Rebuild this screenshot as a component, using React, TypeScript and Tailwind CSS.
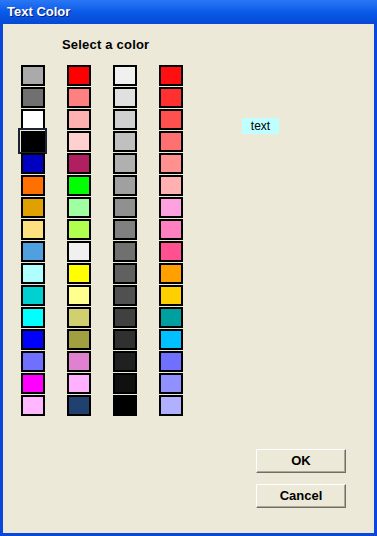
const COLUMNS: string[][] = [
  ["#aaaaaa", "#707070", "#ffffff", "#000000", "#0000c0", "#ff7000", "#e0a000", "#ffe080", "#50a0e0", "#b0ffff", "#00d0d0", "#00ffff", "#0000ff", "#7070ff", "#ff00ff", "#ffb8ff"],
  ["#ff0000", "#ff8080", "#ffb0b0", "#ffd0d0", "#b02060", "#00ff00", "#a0ffa0", "#b0ff50", "#f0f0f0", "#ffff00", "#ffff90", "#d0d070", "#a0a040", "#e080d0", "#ffb0ff", "#204070"],
  ["#f0f0f0", "#e0e0e0", "#d0d0d0", "#c0c0c0", "#b0b0b0", "#a0a0a0", "#909090", "#808080", "#707070", "#606060", "#505050", "#404040", "#303030", "#202020", "#101010", "#000000"],
  ["#ff1010", "#ff3030", "#ff5050", "#ff7070", "#ff9090", "#ffb0b0", "#ffa0e0", "#ff80c0", "#ff5090", "#ffa000", "#ffd000", "#00a0a0", "#00c0ff", "#7070ff", "#9090ff", "#b0b0ff"],
];

const FONT = { fontFamily: '"Liberation Sans", Arial, sans-serif' };

function XpButton({ label }: { label: string }) {
  return (
    <button
      className="w-[90px] h-[24px] bg-[#ece9d8] border border-t-white border-l-white border-r-[#716f64] border-b-[#716f64] shadow-[inset_-1px_-1px_0_#aca899] text-[13px] font-bold text-black flex items-center justify-center"
      style={FONT}
    >
      {label}
    </button>
  );
}

export default function App() {
  return (
    <div className="w-[377px] h-[536px] flex flex-col" style={FONT}>
      {/* title bar */}
      <div className="h-[24px] shrink-0 bg-gradient-to-b from-[#2a78f5] via-[#0a5ae8] to-[#0648d4] flex items-center pl-[7px]">
        <span className="text-white font-bold text-[13px] [text-shadow:1px_1px_0_#0a1e6e]">Text Color</span>
      </div>

      <div className="flex-1 flex bg-[#ece9d8] border-x-[3px] border-b-[3px] border-[#0846dc]">
        {/* palette */}
        <div className="w-[180px] shrink-0 pt-[13px] pl-[18px]">
          <div className="h-[16px] leading-[16px] pl-[41px] text-[13px] font-bold tracking-[0.2px] text-black whitespace-nowrap">Select a color</div>
          <div className="mt-[12px] flex gap-[22px]">
            {COLUMNS.map((col, ci) => (
              <div key={ci} className="flex flex-col gap-[1px]">
                {col.map((c, ri) => (
                  <div key={ri} className="relative w-[24px] h-[21px]">
                    <div className="w-full h-full border-2 border-black" style={{ backgroundColor: c }} />
                    {ci === 0 && ri === 3 && (
                      <span className="absolute -top-[3px] -left-[3px] w-[29px] h-[26px] border-2 border-[#1d2333]" />
                    )}
                  </div>
                ))}
              </div>
            ))}
          </div>
        </div>

        {/* preview + buttons */}
        <div className="flex-1 flex flex-col">
          <div className="mt-[94px] ml-[59px] w-[37px] h-[16px] bg-[#c0ffff] text-[12px] leading-[16px] text-black text-center">text</div>
          <div className="mt-auto self-end mr-[28px] mb-[25px] flex flex-col gap-[11px]">
            <XpButton label="OK" />
            <XpButton label="Cancel" />
          </div>
        </div>
      </div>
    </div>
  );
}
